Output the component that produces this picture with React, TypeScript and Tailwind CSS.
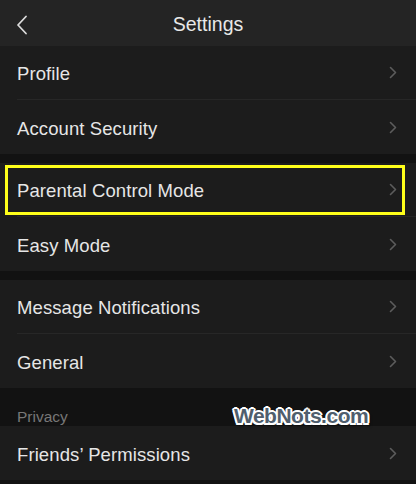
import React from 'react';

const Chevron = () => (
  <svg width="8" height="13" viewBox="0 0 8 13" fill="none" className="shrink-0">
    <path d="M1.5 1.5 L6.5 6.5 L1.5 11.5" stroke="#5c5c5c" strokeWidth="1.6" strokeLinecap="round" strokeLinejoin="round" />
  </svg>
);

const Row: React.FC<{ label: string; divider?: boolean; children?: React.ReactNode }> = ({ label, divider, children }) => (
  <div className="relative h-[54px] bg-[#1c1c1c] pl-[17px]">
    <div className={`h-full flex items-center justify-between pr-[19px] ${divider ? 'border-b border-[#272727]' : ''}`}>
      <span className="pt-[3px] text-[18.5px] text-[#e6e6e6] tracking-[0.1px]">{label}</span>
      <Chevron />
    </div>
    {children}
  </div>
);

const Gap = () => <div className="h-[9px] bg-[#121212]" />;

const App: React.FC = () => {
  return (
    <div className="relative w-[416px] h-[484px] overflow-hidden bg-[#121212] font-['Liberation_Sans','Helvetica',sans-serif]">
      {/* header */}
      <div className="relative h-[46px] bg-[#242424] flex items-center justify-center">
        <svg width="14" height="20" viewBox="0 0 14 20" fill="none" className="absolute left-[15px] top-[15px]">
          <path d="M11 1.5 L3 10 L11 18.5" stroke="#dcdcdc" strokeWidth="1.8" strokeLinecap="round" strokeLinejoin="round" />
        </svg>
        <span className="pt-[3px] text-[19.5px] text-[#e8e8e8]">Settings</span>
      </div>

      <Row label="Profile" divider />
      <Row label="Account Security" />
      <Gap />
      <Row label="Parental Control Mode" divider>
        <div className="absolute left-[5px] top-[2px] w-[400px] h-[50px] border-[3px] border-[#ffff1a]" />
      </Row>
      <Row label="Easy Mode" />
      <Gap />
      <Row label="Message Notifications" divider />
      <Row label="General" />

      {/* privacy section header */}
      <div className="h-[38px] bg-[#121212] pl-[17px] flex items-end pb-[1px]">
        <span className="text-[15.5px] leading-[16px] text-[#777777]">Privacy</span>
      </div>
      <Row label="Friends’ Permissions" />

      {/* watermark */}
      <div className="absolute left-[234px] top-[400px] text-[21px] font-bold tracking-[-0.5px] text-[#4f5e6d] [text-shadow:2px_0_0_#fff,-2px_0_0_#fff,0_2px_0_#fff,0_-2px_0_#fff,1.5px_1.5px_0_#fff,-1.5px_-1.5px_0_#fff,1.5px_-1.5px_0_#fff,-1.5px_1.5px_0_#fff,2px_3px_3px_rgba(0,0,0,0.6)]">
        WebNots.com
      </div>
    </div>
  );
};

export default App;
